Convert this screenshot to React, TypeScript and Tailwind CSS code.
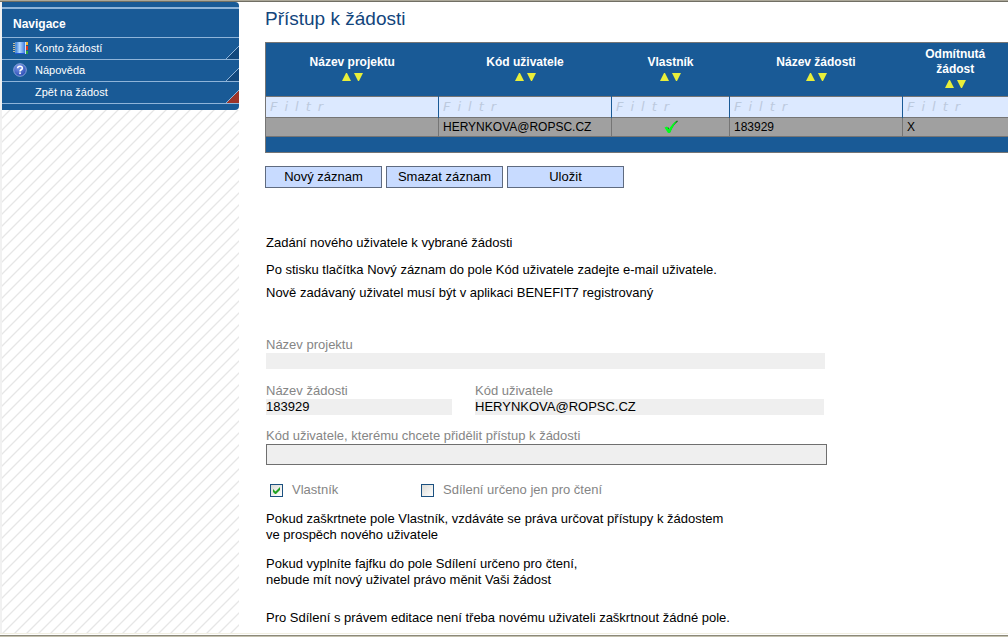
import React from "react";

const columns = [
  { id: "projekt", title: "Název projektu", width: "w-[173px]" },
  { id: "kod", title: "Kód uživatele", width: "w-[173px]" },
  { id: "vlastnik", title: "Vlastník", width: "w-[118px]" },
  { id: "zadost", title: "Název žádosti", width: "w-[173px]" },
  { id: "odmitnuta", title: "Odmítnutá žádost", width: "w-[106px]" },
];

function NotebookIcon() {
  return (
    <svg width="16" height="13" viewBox="0 0 16 13" shapeRendering="crispEdges" aria-hidden="true">
      <defs>
        <linearGradient id="cover" x1="0" x2="1" y1="0" y2="0">
          <stop offset="0" stopColor="#3f87e0" />
          <stop offset="0.4" stopColor="#b5d8ff" />
          <stop offset="1" stopColor="#3d7be0" />
        </linearGradient>
      </defs>
      <rect x="12" y="0" width="1" height="12" fill="#cfe2fa" />
      <rect x="13" y="0" width="2" height="3" fill="#f7b52a" />
      <rect x="13" y="4" width="2" height="4" fill="#e03a1e" />
      <rect x="13" y="9" width="2" height="3" fill="#2fa53a" />
      <rect x="3" y="0" width="9" height="12" fill="url(#cover)" />
      <rect x="2" y="11" width="10" height="1" fill="#1f58d8" />
      <path d="M0 1.5h3M0 3.5h3M0 5.5h3M0 7.5h3M0 9.5h3" stroke="#c9bf9a" />
      <path d="M2 0v11" stroke="#5d94d2" strokeWidth="1" />
    </svg>
  );
}

function HelpIcon() {
  return (
    <svg width="14" height="14" viewBox="0 0 14 14" aria-hidden="true">
      <defs>
        <radialGradient id="ball" cx="0.4" cy="0.3" r="0.7">
          <stop offset="0" stopColor="#7d9aea" />
          <stop offset="1" stopColor="#2a4bb4" />
        </radialGradient>
      </defs>
      <circle cx="7" cy="7" r="6.3" fill="url(#ball)" stroke="#8fabdf" strokeWidth="0.9" />
      <path d="M4.7 5.2c0-2.7 4.7-2.6 4.6 0C9.3 6.8 7 6.7 7 8.4" fill="none" stroke="#fff" strokeWidth="1.6" />
      <rect x="6.2" y="9.4" width="1.7" height="1.7" fill="#fff" />
    </svg>
  );
}

function Corner({ red = false }: { red?: boolean }) {
  return (
    <svg className="self-end" width="13" height="13" viewBox="0 0 13 13" aria-hidden="true">
      <path d="M0 13L13 0V13Z" fill={red ? "#9c3429" : "#12487d"} />
      <path d="M0 13L13 0" stroke="#8fb4d9" />
    </svg>
  );
}

function SortIcons({ title }: { title: string }) {
  return (
    <span className="flex justify-center gap-[3px] pt-[3px] pb-1">
      <button type="button" aria-label={`${title} vzestupně`}>
        <svg className="block" width="9" height="8" viewBox="0 0 9 8" aria-hidden="true">
          <path d="M4 0H5L9 8H0Z" fill="#e8ee3a" />
        </svg>
      </button>
      <button type="button" aria-label={`${title} sestupně`}>
        <svg className="block" width="9" height="8" viewBox="0 0 9 8" aria-hidden="true">
          <path d="M0 0H9L5 8H4Z" fill="#e8ee3a" />
        </svg>
      </button>
    </span>
  );
}

function Navigation() {
  const items = [
    { label: "Konto žádostí", icon: <NotebookIcon />, red: false },
    { label: "Nápověda", icon: <HelpIcon />, red: false },
    { label: "Zpět na žádost", icon: null, red: true },
  ];
  return (
    <nav className="rounded-r-[4px] bg-[#195a96] pt-[5px] pb-[6px] text-white">
      <h2 className="h-[30px] border-t-2 border-[#8fb4d9] pl-[11px] text-[12px] leading-[30px] font-bold">Navigace</h2>
      <ul className="border-b border-[#8fb4d9]">
        {items.map((item) => (
          <li key={item.label} className="border-t border-[#8fb4d9]">
            <a href="#" className="flex h-[21px]">
              <span className="flex w-[33px] shrink-0 items-center pb-px pl-[11px]">{item.icon}</span>
              <span className="grow text-[11px] leading-[20px]">{item.label}</span>
              <Corner red={item.red} />
            </a>
          </li>
        ))}
      </ul>
    </nav>
  );
}

function Records() {
  return (
    <table className="w-full table-fixed border-collapse border border-[#757575] bg-[#195a96] text-[12px]">
      <thead>
        <tr className="h-[54px] text-white">
          {columns.map((c) => (
            <th key={c.id} className={`${c.width} px-5 py-0 leading-[15px] font-bold`}>
              {c.title}
              <SortIcons title={c.title} />
            </th>
          ))}
        </tr>
        <tr className="h-[21px] border-t border-[#757575] bg-[#dce9ff]">
          {columns.map((c) => (
            <td key={c.id} className="border-r border-[#195a96] p-0">
              <input
                aria-label={`Filtr ${c.title}`}
                placeholder="Filtr"
                className="block h-[19px] w-full bg-transparent px-1 font-['DejaVu_Sans',sans-serif] text-[13px] tracking-[7px] italic outline-none placeholder:text-[#bccade] placeholder:opacity-100"
              />
            </td>
          ))}
        </tr>
      </thead>
      <tbody>
        <tr className="h-[19px] border-y border-[#757575] bg-[#a0a0a0] leading-[17px] [&>td]:border-r [&>td]:border-[#757575] [&>td]:px-1 [&>td]:py-0">
          <td />
          <td>HERYNKOVA@ROPSC.CZ</td>
          <td>
            <svg className="mx-auto" width="14" height="14" viewBox="0 0 14 14" role="img" aria-label="Ano">
              <path d="M2 9L4 8L6 11Q9 4 13.5 1" fill="none" stroke="#0b5a10" strokeWidth="1.2" />
              <path d="M0.5 7.5L3 6.5L5 9.5Q8 3.5 13 0.5Q9 6 6 13H4Z" fill="#00ff1a" />
            </svg>
          </td>
          <td>183929</td>
          <td>X</td>
        </tr>
      </tbody>
      <tfoot>
        <tr className="h-[16px]">
          <td colSpan={5} className="p-0" />
        </tr>
      </tfoot>
    </table>
  );
}

function Field({ id, label, value = "" }: { id: string; label: string; value?: string }) {
  return (
    <div>
      <label htmlFor={id} className="block leading-[16px] text-[#858585]">{label}</label>
      <input id={id} readOnly defaultValue={value} className="block h-[16px] w-full bg-[#efefef] text-[13px] leading-[16px] outline-none" />
    </div>
  );
}

function Check({ id, label, checked = false }: { id: string; label: string; checked?: boolean }) {
  return (
    <div className="flex items-center gap-[9px]">
      <span className="grid">
        <input
          id={id}
          type="checkbox"
          defaultChecked={checked}
          className="peer col-start-1 row-start-1 size-[13px] appearance-none border border-[#1c5180] bg-linear-to-br from-[#dcdcd7] to-white"
        />
        <svg className="pointer-events-none invisible z-10 col-start-1 row-start-1 peer-checked:visible" width="13" height="13" viewBox="0 0 13 13" aria-hidden="true">
          <path d="M3 5v3l2 2h1l4-4V3L5.5 7.5Z" fill="#21a121" />
        </svg>
      </span>
      <label htmlFor={id} className="leading-[16px] text-[#858585]">{label}</label>
    </div>
  );
}

const button = "h-[22px] w-[117px] border border-[#5f6b80] bg-[#c8dbff] text-center leading-[20px]";

export default function App() {
  return (
    <div className="flex min-h-screen flex-col overflow-x-hidden border-t border-[#aca899] bg-white font-['Liberation_Sans',Arial,sans-serif] text-[13px] text-black">
      <div className="flex grow border-t border-[#716f64]">
        <aside className="flex w-[239px] shrink-0 flex-col border-l-2 border-[#f1f1f1]">
          <Navigation />
          <div className="grow bg-[linear-gradient(135deg,#e6e6e6_0%,#e6e6e6_3%,#ffffff_5%,#ffffff_45%,#e6e6e6_47%,#e6e6e6_53%,#ffffff_55%,#ffffff_95%,#e6e6e6_97%)] bg-[length:12px_12px] bg-[position:8px_0px]" />
        </aside>
        <main className="min-w-0 grow pl-[26px]">
          <h1 className="pt-[7px] pb-[14px] text-[19px] leading-[19px] text-[#12457c]">Přístup k žádosti</h1>
          <Records />
          <div className="flex gap-1 pt-[13px]">
            <button type="button" className={button}>Nový záznam</button>
            <button type="button" className={button}>Smazat záznam</button>
            <button type="button" className={button}>Uložit</button>
          </div>
          <div className="pt-[47px] pl-px leading-[16px]">
            <p>Zadání nového uživatele k vybrané žádosti</p>
            <p className="pt-[11px]">Po stisku tlačítka Nový záznam do pole Kód uživatele zadejte e-mail uživatele.</p>
            <p className="pt-[7px]">Nově zadávaný uživatel musí být v aplikaci BENEFIT7 registrovaný</p>
          </div>
          <form className="max-w-[562px] pt-[36px] pl-px">
            <div className="pr-[2px]">
              <Field id="nazev-projektu" label="Název projektu" />
            </div>
            <div className="grid grid-cols-[186px_1fr] gap-x-[23px] pt-[14px] pr-[3px]">
              <Field id="nazev-zadosti" label="Název žádosti" value="183929" />
              <Field id="kod-uzivatele" label="Kód uživatele" value="HERYNKOVA@ROPSC.CZ" />
            </div>
            <div className="pt-[13px]">
              <label htmlFor="novy-kod" className="block leading-[16px] text-[#858585]">Kód uživatele, kterému chcete přidělit přístup k žádosti</label>
              <input id="novy-kod" className="block h-[21px] w-full border border-[#6f6f6f] bg-[#efefef] px-1 outline-none" />
            </div>
            <div className="grid grid-cols-[151px_1fr] pt-[17px] pl-1">
              <Check id="vlastnik" label="Vlastník" checked />
              <Check id="cteni" label="Sdílení určeno jen pro čtení" />
            </div>
          </form>
          <div className="pt-[13px] pb-[7px] pl-px leading-[16px]">
            <p>Pokud zaškrtnete pole Vlastník, vzdáváte se práva určovat přístupy k žádostem<br />ve prospěch nového uživatele</p>
            <p className="pt-[13px]">Pokud vyplníte fajfku do pole Sdílení určeno pro čtení,<br />nebude mít nový uživatel právo měnit Vaši žádost</p>
            <p className="pt-[22px]">Pro Sdílení s právem editace není třeba novému uživateli zaškrtnout žádné pole.</p>
          </div>
        </main>
      </div>
      <footer className="h-1 border-t border-[#f1efe2]">
        <div className="mt-px h-[2px] border-t border-[#8c897a] bg-[#c5c2b0]" />
      </footer>
    </div>
  );
}
